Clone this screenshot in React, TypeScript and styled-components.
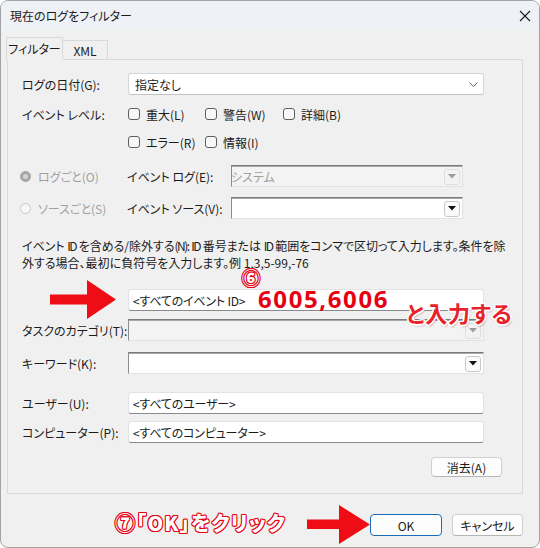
import React from "react";
import styled, { createGlobalStyle } from "styled-components";

const Global = createGlobalStyle`
  html, body { margin: 0; padding: 0; background: #ffffff; }
  body {
    font-family: "Noto Sans CJK JP", "Noto Sans", sans-serif;
    font-size: 12px;
    color: #1b1b1b;
    font-feature-settings: "palt";
  }
`;

const Window = styled.div`
  position: relative;
  width: 540px;
  height: 548px;
  box-sizing: border-box;
  border: 1px solid #a3a3a3;
  border-radius: 8px;
  overflow: hidden;
  background: #f0f0f0;
  display: flex;
  flex-direction: column;
`;

const TitleBar = styled.div`
  height: 29px;
  flex: none;
  background: #eef1f6;
  display: flex;
  align-items: center;
  justify-content: space-between;
  padding: 0 8px 0 9px;
`;

const Title = styled.span`
  font-size: 12px;
  color: #1b1b1b;
`;

const TabStrip = styled.div`
  display: flex;
  align-items: flex-end;
  height: 23px;
  margin-top: 7px;
  margin-bottom: -1px;
  padding-left: 5px;
  position: relative;
  z-index: 1;
`;

const Tab = styled.div<{ $active?: boolean }>`
  box-sizing: border-box;
  height: ${(p) => (p.$active ? "23px" : "20px")};
  width: ${(p) => (p.$active ? "57px" : "45px")};
  border: 1px solid #d9d9d9;
  border-bottom: ${(p) => (p.$active ? "1px solid #f0f0f0" : "1px solid #d9d9d9")};
  border-left: ${(p) => (p.$active ? "1px solid #d9d9d9" : "none")};
  background: #f0f0f0;
  display: flex;
  align-items: center;
  justify-content: center;
  font-size: 12px;
  padding-top: ${(p) => (p.$active ? "0" : "1px")};
`;

const Panel = styled.div`
  margin: 0 16px 0 6px;
  border: 1px solid #dadada;
  padding: 13px 38px 16px 14px;
  display: flex;
  flex-direction: column;
`;

const Row = styled.div<{ $mt?: number; $h?: number }>`
  display: flex;
  align-items: center;
  margin-top: ${(p) => p.$mt ?? 0}px;
  height: ${(p) => p.$h ?? 22}px;
`;

const Label = styled.div<{ $w?: number; $gray?: boolean }>`
  width: ${(p) => p.$w ?? 106}px;
  flex: none;
  white-space: nowrap;
  color: ${(p) => (p.$gray ? "#a0a0a0" : "#1b1b1b")};
`;

const ModernSelect = styled.div`
  flex: 1;
  box-sizing: border-box;
  height: 22px;
  background: #ffffff;
  border: 1px solid #d6d6d6;
  border-bottom-color: #c2c2c2;
  border-radius: 3px;
  display: flex;
  align-items: center;
  justify-content: space-between;
  padding: 0 5px 0 6px;
`;

const TextInput = styled.div`
  flex: 1;
  box-sizing: border-box;
  height: 22px;
  background: #ffffff;
  border: 1px solid #e3e3e3;
  border-bottom: 1px solid #8a8a8a;
  border-radius: 3px;
  display: flex;
  align-items: center;
  padding: 0 4px;
  white-space: nowrap;
  letter-spacing: -0.2px;
`;

const OldCombo = styled.div<{ $disabled?: boolean; $w?: number }>`
  ${(p) => (p.$w ? `width: ${p.$w}px; flex: none;` : "flex: 1;")}
  box-sizing: border-box;
  height: 22px;
  background: ${(p) => (p.$disabled ? "#f3f3f3" : "#ffffff")};
  border: 1px solid;
  border-color: #7a7a7a #e2e2e2 #e2e2e2 #8c8c8c;
  box-shadow: inset 0 1px 0 #a8a8a8;
  display: flex;
  align-items: center;
  justify-content: space-between;
  padding: 1px 2px 0 1px;
  color: ${(p) => (p.$disabled ? "#a0a0a0" : "#1b1b1b")};
  white-space: nowrap;
  overflow: hidden;
`;

const ComboText = styled.span`
  font-size: 12px;
  margin-left: -2px;
`;

const DropBtn = styled.div<{ $disabled?: boolean }>`
  width: 16px;
  height: 16px;
  box-sizing: border-box;
  flex: none;
  border: 1px solid ${(p) => (p.$disabled ? "#dedede" : "#c8c8c8")};
  border-radius: 3px;
  background: ${(p) => (p.$disabled ? "#f2f2f2" : "#fbfbfb")};
  display: flex;
  align-items: center;
  justify-content: center;
`;

const CheckGrid = styled.div`
  display: grid;
  grid-template-columns: 77px 78px auto;
  align-items: center;
  height: 20px;
`;

const CheckItem = styled.label`
  display: flex;
  align-items: center;
  gap: 6px;
  white-space: nowrap;
`;

const CheckBox = styled.span`
  width: 12px;
  height: 12px;
  box-sizing: border-box;
  border: 1px solid #5e5e5e;
  border-radius: 3px;
  background: #f7f7f7;
  flex: none;
`;

const RadioItem = styled.div`
  width: 107px;
  margin-left: -2px;
  flex: none;
  display: flex;
  align-items: center;
  gap: 7px;
  color: #a0a0a0;
  white-space: nowrap;
`;

const RadioDot = styled.span<{ $checked?: boolean }>`
  width: 11px;
  height: 11px;
  box-sizing: border-box;
  border-radius: 50%;
  flex: none;
  display: flex;
  align-items: center;
  justify-content: center;
  background: ${(p) => (p.$checked ? "#a6a6a6" : "#f7f7f7")};
  border: 1px solid ${(p) => (p.$checked ? "#a6a6a6" : "#c6c6c6")};
  &::after {
    content: "";
    display: ${(p) => (p.$checked ? "block" : "none")};
    width: 5px;
    height: 5px;
    border-radius: 50%;
    background: #d4d4d4;
  }
`;

const Description = styled.div`
  margin-top: 18px;
  line-height: 17px;
`;

const DescLine = styled.div<{ $justify?: boolean }>`
  white-space: nowrap;
  ${(p) =>
    p.$justify
      ? `
    width: 482px;
    white-space: normal;
    letter-spacing: -1.5px;
    text-align: justify;
    text-align-last: justify;
    text-justify: inter-character;
    height: 17px;
    overflow: visible;
  `
      : ""}
`;

const ButtonRow = styled.div<{ $mt: number }>`
  display: flex;
  justify-content: flex-end;
  gap: 10px;
  margin-top: ${(p) => p.$mt}px;
`;

const ClearRow = styled(ButtonRow)`
  margin-right: -18px;
`;

const Footer = styled(ButtonRow)`
  padding-right: 16px;
`;

const Button = styled.button<{ $w: number; $primary?: boolean; $h?: number }>`
  width: ${(p) => p.$w}px;
  height: ${(p) => p.$h ?? 22}px;
  box-sizing: border-box;
  border: 1px solid ${(p) => (p.$primary ? "#1a6bb8" : "#d0d0d0")};
  border-bottom-color: ${(p) => (p.$primary ? "#1a6bb8" : "#b5b5b5")};
  border-radius: 4px;
  background: #fdfdfd;
  font-family: "Noto Sans CJK JP", "Noto Sans", sans-serif;
  font-feature-settings: "palt";
  font-size: 12px;
  color: #1b1b1b;
  padding: 0;
  display: flex;
  align-items: center;
  justify-content: center;
`;

const Overlay = styled.div<{ $x: number; $y: number }>`
  position: absolute;
  left: ${(p) => p.$x - 1}px;
  top: ${(p) => p.$y - 1}px;
  white-space: nowrap;
  pointer-events: none;
`;

const RedNumber = styled(Overlay)`
  font-family: "Noto Sans", "Liberation Sans", sans-serif;
  font-weight: 700;
  font-size: 24px;
  line-height: 24px;
  letter-spacing: 1.6px;
  color: #e60012;
`;

const OutlineText = styled(Overlay)<{ $size: number; $ls?: number }>`
  font-family: "Noto Sans CJK JP", sans-serif;
  font-weight: 900;
  font-size: ${(p) => p.$size}px;
  line-height: 1;
  letter-spacing: ${(p) => p.$ls ?? 0}px;
  color: #ffffff;
  text-shadow: 1px 0 0 #e60012, -1px 0 0 #e60012, 0 1px 0 #e60012, 0 -1px 0 #e60012,
    0.8px 0.8px 0 #e60012, -0.8px -0.8px 0 #e60012, 0.8px -0.8px 0 #e60012,
    -0.8px 0.8px 0 #e60012;
`;

const RedOnWhite = styled(Overlay)`
  font-family: "Noto Sans CJK JP", sans-serif;
  font-weight: 700;
  font-size: 22px;
  line-height: 1;
  letter-spacing: 0.8px;
  color: #e8222b;
  text-shadow: 1.5px 0 0 #fff, -1.5px 0 0 #fff, 0 1.5px 0 #fff, 0 -1.5px 0 #fff,
    1.2px 1.2px 0 #fff, -1.2px -1.2px 0 #fff, 1.2px -1.2px 0 #fff, -1.2px 1.2px 0 #fff,
    1px 2px 2px rgba(120, 0, 0, 0.45);
`;

const Tri = ({ color }: { color: string }) => (
  <svg width="8" height="5" viewBox="0 0 8 5">
    <path d="M0 0 H8 L4 4.5 Z" fill={color} />
  </svg>
);

const Chevron = () => (
  <svg width="9" height="5" viewBox="0 0 9 5">
    <path d="M0.5 0.5 L4.5 4.5 L8.5 0.5" fill="none" stroke="#6a6a6a" strokeWidth="1" />
  </svg>
);

const CloseIcon = () => (
  <svg width="12" height="12" viewBox="0 0 12 12">
    <path d="M1 1 L11 11 M11 1 L1 11" stroke="#1b1b1b" strokeWidth="1.1" />
  </svg>
);

const Arrow = ({ w, h, points }: { w: number; h: number; points: string }) => (
  <svg width={w} height={h} viewBox={`0 0 ${w} ${h}`}>
    <polygon points={points} fill="#ee0d14" />
  </svg>
);

export default function App() {
  return (
    <>
      <Global />
      <Window>
        <TitleBar>
          <Title>現在のログをフィルター</Title>
          <CloseIcon />
        </TitleBar>
        <TabStrip>
          <Tab $active>フィルター</Tab>
          <Tab>XML</Tab>
        </TabStrip>
        <Panel>
          <Row $h={22}>
            <Label>ログの日付(G):</Label>
            <ModernSelect>
              <span>指定なし</span>
              <Chevron />
            </ModernSelect>
          </Row>
          <Row $mt={9} $h={20}>
            <Label>イベント レベル:</Label>
            <CheckGrid>
              <CheckItem><CheckBox />重大(L)</CheckItem>
              <CheckItem><CheckBox />警告(W)</CheckItem>
              <CheckItem><CheckBox />詳細(B)</CheckItem>
            </CheckGrid>
          </Row>
          <Row $mt={8} $h={20}>
            <Label />
            <CheckGrid>
              <CheckItem><CheckBox />エラー(R)</CheckItem>
              <CheckItem><CheckBox />情報(I)</CheckItem>
            </CheckGrid>
          </Row>
          <Row $mt={13}>
            <RadioItem><RadioDot $checked />ログごと(O)</RadioItem>
            <Label $w={104}>イベント ログ(E):</Label>
            <OldCombo $disabled $w={232}>
              <ComboText>システム</ComboText>
              <DropBtn $disabled><Tri color="#9c9c9c" /></DropBtn>
            </OldCombo>
          </Row>
          <Row $mt={10}>
            <RadioItem><RadioDot />ソースごと(S)</RadioItem>
            <Label $w={104}>イベント ソース(V):</Label>
            <OldCombo $w={232}>
              <ComboText />
              <DropBtn><Tri color="#111" /></DropBtn>
            </OldCombo>
          </Row>
          <Description>
            <DescLine $justify>
              イベント ID を含める/除外する(N): ID 番号または ID 範囲をコンマで区切って入力します。条件を除
            </DescLine>
            <DescLine>外する場合、最初に負符号を入力します。例 1,3,5-99,-76</DescLine>
          </Description>
          <Row $mt={18}>
            <Label />
            <TextInput>&lt;すべてのイベント ID&gt;</TextInput>
          </Row>
          <Row $mt={8}>
            <Label>タスクのカテゴリ(T):</Label>
            <OldCombo $disabled>
              <ComboText />
              <DropBtn $disabled><Tri color="#9c9c9c" /></DropBtn>
            </OldCombo>
          </Row>
          <Row $mt={11}>
            <Label>キーワード(K):</Label>
            <OldCombo>
              <ComboText />
              <DropBtn><Tri color="#111" /></DropBtn>
            </OldCombo>
          </Row>
          <Row $mt={18}>
            <Label>ユーザー(U):</Label>
            <TextInput>&lt;すべてのユーザー&gt;</TextInput>
          </Row>
          <Row $mt={7}>
            <Label>コンピューター(P):</Label>
            <TextInput>&lt;すべてのコンピューター&gt;</TextInput>
          </Row>
          <ClearRow $mt={14}>
            <Button $w={71} $h={20}>消去(A)</Button>
          </ClearRow>
        </Panel>
        <Footer $mt={20}>
          <Button $w={72} $primary>OK</Button>
          <Button $w={71}>キャンセル</Button>
        </Footer>

        <Overlay $x={50} $y={280}>
          <Arrow w={66} h={39} points="0,14.5 37,14.5 37,0 66,19.5 37,39 37,24.5 0,24.5" />
        </Overlay>
        <OutlineText $x={242} $y={268} $size={18}>⑥</OutlineText>
        <RedNumber $x={258} $y={287}>6005,6006</RedNumber>
        <RedOnWhite $x={406} $y={301}>と入力する</RedOnWhite>
        <OutlineText $x={115} $y={513} $size={20} $ls={1.2}>⑦「OK」をクリック</OutlineText>
        <Overlay $x={307} $y={505}>
          <Arrow w={63} h={39} points="0,14.5 32,14.5 32,0 63,19.5 32,39 32,24 0,24" />
        </Overlay>
      </Window>
    </>
  );
}
